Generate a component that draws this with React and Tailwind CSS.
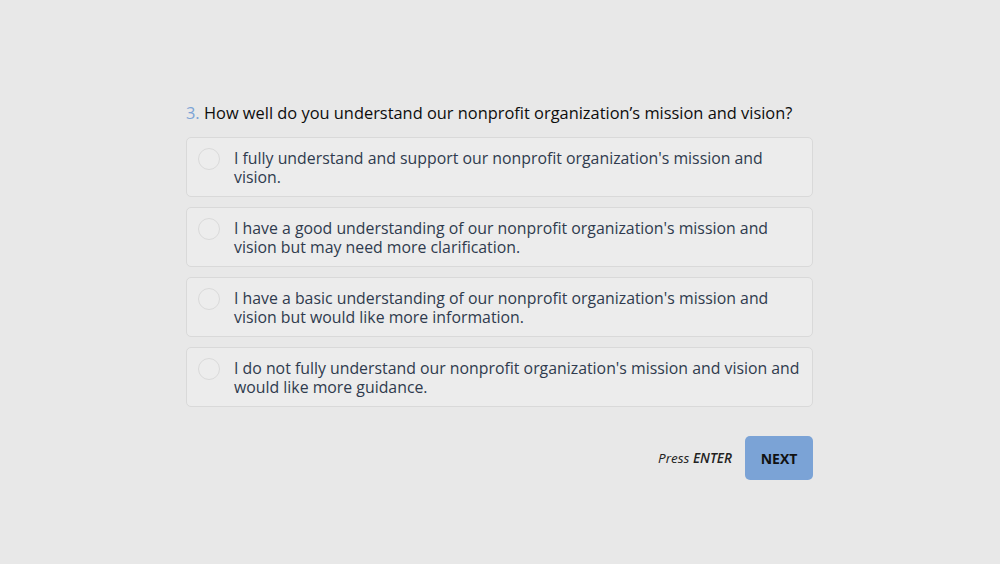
import React, { useState } from 'react';

const options = [
  "I fully understand and support our nonprofit organization's mission and vision.",
  "I have a good understanding of our nonprofit organization's mission and vision but may need more clarification.",
  "I have a basic understanding of our nonprofit organization's mission and vision but would like more information.",
  "I do not fully understand our nonprofit organization's mission and vision and would like more guidance.",
];

export default function App() {
  const [selected, setSelected] = useState(null);

  return (
    <div className="w-full h-[564px] bg-[#e8e8e8] font-['Open_Sans',sans-serif]">
      <div className="w-[627px] ml-[186px] pt-[101px]">
        <h2 className="text-[16.4px] leading-[24px] text-[#0d0d0d] whitespace-nowrap">
          <span className="text-[#7ba3d6]">3.</span> How well do you understand our nonprofit organization’s mission and vision?
        </h2>
        <div className="mt-[12px] flex flex-col gap-[10px]">
          {options.map((opt, i) => (
            <button
              key={i}
              onClick={() => setSelected(i)}
              className="flex items-start gap-[14px] h-[60px] pl-[11px] pr-[6px] pt-[11px] text-left rounded-[5px] border border-[#d9d9d9] bg-[#ececec]"
            >
              <span
                className={`-mt-[1px] shrink-0 w-[22px] h-[22px] rounded-full border border-[#dadada] ${
                  selected === i ? 'bg-[#7ba3d6]' : 'bg-[#ededed]'
                }`}
              />
              <span className="text-[15.85px] leading-[19px] text-[#2f3b4e]">{opt}</span>
            </button>
          ))}
        </div>
        <div className="mt-[29px] flex items-center justify-end gap-[13px]">
          <span className="text-[13.5px] italic text-[#222222]">
            Press <span className="font-semibold">ENTER</span>
          </span>
          <button className="w-[68px] h-[44px] rounded-[5px] bg-[#7ba3d6] text-[14px] font-bold text-[#111111]">
            NEXT
          </button>
        </div>
      </div>
    </div>
  );
}
